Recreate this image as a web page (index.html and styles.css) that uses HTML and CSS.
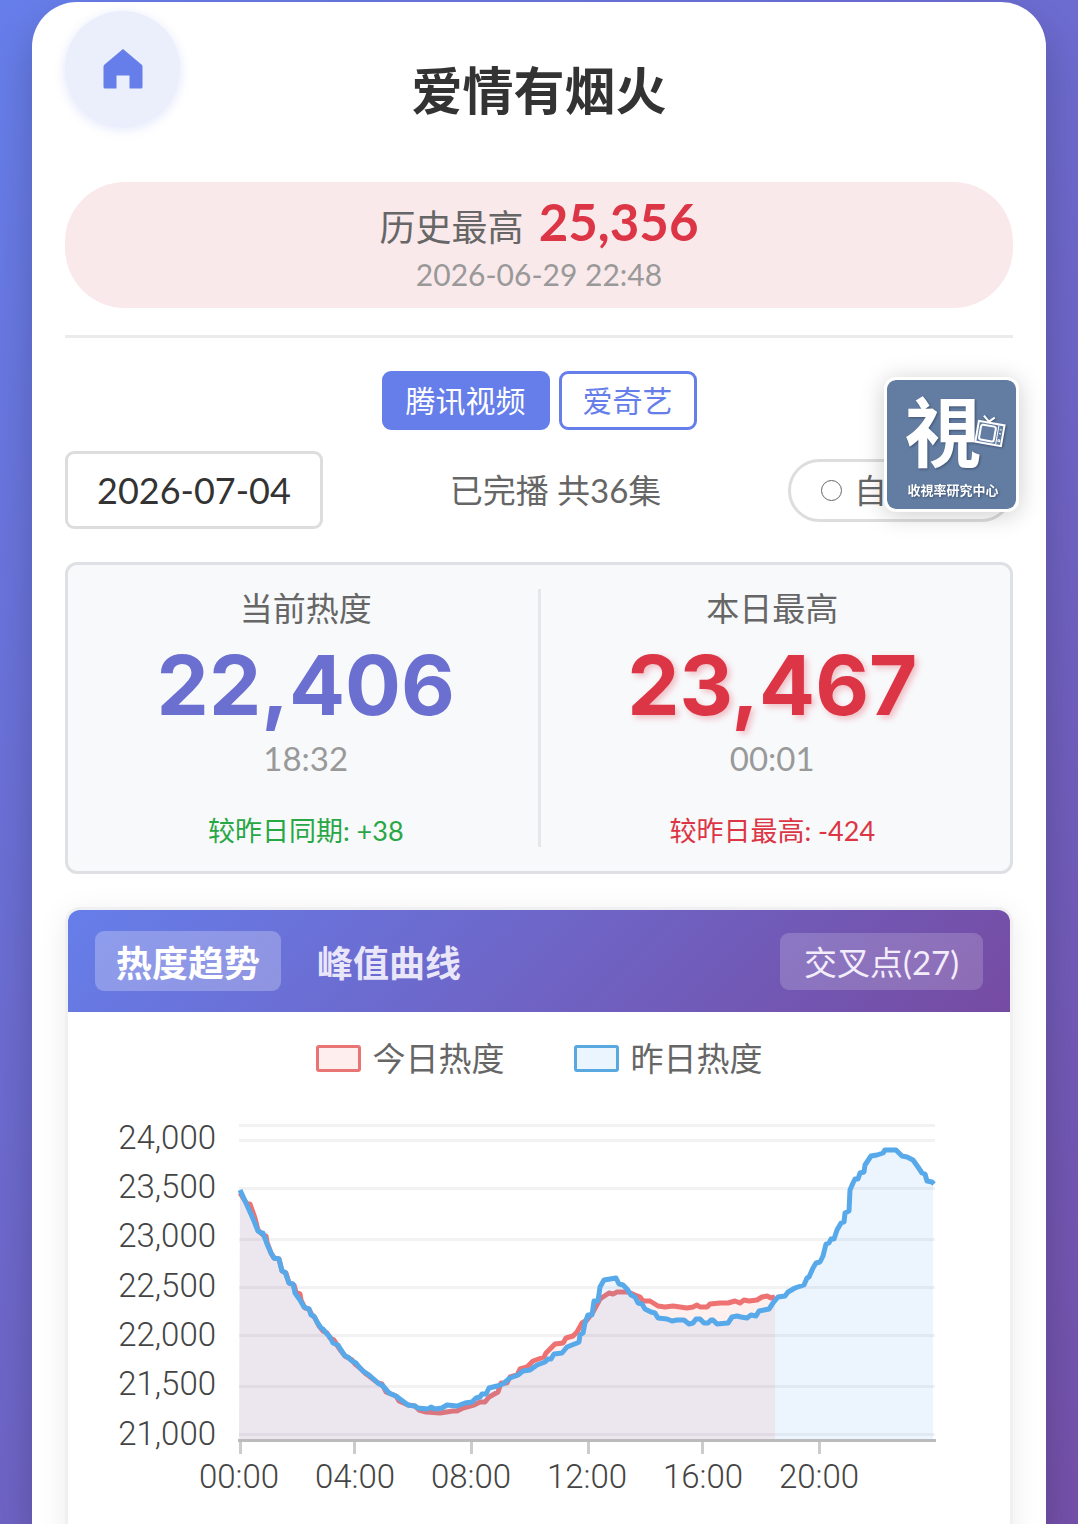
FILE: index.html
```html
<!DOCTYPE html>
<html lang="zh-CN">

<head>
    <meta charset="utf-8">
    <meta name="viewport" content="width=device-width, initial-scale=1.0">
    <title>爱情有烟火</title>
    <link rel="stylesheet" href="styles.css">
</head>

<body>
    <main class="container">
        <header class="header">
            <a class="home" href="#" aria-label="首页">
                <svg viewBox="0 0 40 40" width="40" height="40">
                    <path fill="#667eea" d="M20 0 L39 16 Q39.500 16.500 39.500 18 V38 Q39.500 39.500 38 39.500 H26.500 V26.500 H13.500 V39.500 H2 Q.5 39.500 .5 38 V18 Q.5 16.500 1 16 Z" />
                </svg>
            </a>
            <h1>爱情有烟火</h1>
        </header>

        <section class="record">
            <p class="record-top">历史最高 <strong>25,356</strong></p>
            <p class="record-time">2026-06-29 22:48</p>
        </section>

        <nav class="platforms">
            <button class="platform valgt">腾讯视频</button>
            <button class="platform">爱奇艺</button>
        </nav>

        <div class="controls">
            <input class="date" type="text" value="2026-07-04" aria-label="日期">
            <p class="status">已完播 共36集</p>
            <button class="auto"><span class="dot"></span>自动刷新</button>
        </div>

        <section class="stats">
            <div class="stat">
                <h2>当前热度</h2>
                <p class="number now">22,406</p>
                <p class="time">18:32</p>
                <p class="diff up">较昨日同期: +38</p>
            </div>
            <div class="divider"></div>
            <div class="stat">
                <h2>本日最高</h2>
                <p class="number top">23,467</p>
                <p class="time">00:01</p>
                <p class="diff down">较昨日最高: -424</p>
            </div>
        </section>

        <section class="chart">
            <div class="chart-head">
                <div class="tabs">
                    <button class="tab active">热度趋势</button>
                    <button class="tab">峰值曲线</button>
                </div>
                <button class="cross">交叉点(27)</button>
            </div>
            <div class="legend">
                <span class="item"><i class="box red"></i>今日热度</span>
                <span class="item"><i class="box blue"></i>昨日热度</span>
            </div>
            <svg class="plot" viewBox="0 0 942 480">
                <g class="labels-y">
                    <text x="148" y="68">24,000</text>
                    <text x="148" y="117">23,500</text>
                    <text x="148" y="166">23,000</text>
                    <text x="148" y="216">22,500</text>
                    <text x="148" y="265">22,000</text>
                    <text x="148" y="314">21,500</text>
                    <text x="148" y="364">21,000</text>
                </g>
                <g transform="translate(171 44)">
                    <path class="grid" d="M0 .5H696M0 15.500H696M0 63.500H696M0 114.500H696M0 162.500H696M0 210.500H696M0 261.500H696M0 309.500H696" />

                    <!-- 今日 -->
                    <path class="fill-red" d="M0 315 L1 68 8 79 11 79 16 93 19 105 24 110 28 117 32 128 35 133 40 134 43 146 47 148 50 158 55 160 57 167 61 169 66 183 70 184 73 190 76 193 80 201 84 206 88 208 91 213 95 215 98 220 102 226 106 231 113 235 116 239 121 243 127 249 130 251 139 258 143 259 147 267 157 271 160 276 169 280 176 281 180 285 187 287 201 288 214 286 218 286 224 283 235 280 241 277 246 277 250 272 259 267 262 258 268 258 271 252 278 250 281 244 288 242 294 236 305 232 307 228 316 219 324 218 327 213 334 211 338 207 343 198 348 195 354 187 361 174 370 168 374 169 378 167 389 167 396 170 401 172 404 176 411 176 419 181 426 182 434 181 448 183 454 182 458 180 461 182 468 182 471 179 481 178 489 178 496 176 501 178 505 175 510 176 518 175 523 172 528 171 532 173 536 172 V315Z" />
                    <path class="line-red" d="M1 68 8 79 11 79 16 93 19 105 24 110 27 111 28 117 32 128 35 133 40 134 43 146 47 148 50 158 55 160 57 167 61 169 62 175 66 183 70 184 73 190 76 193 80 201 84 206 88 208 91 213 95 215 98 220 102 226 106 231 113 235 116 239 121 243 127 249 130 251 139 258 143 259 147 267 157 271 160 276 169 280 176 281 180 285 187 287 201 288 214 286 218 286 224 283 235 280 241 277 246 277 250 272 259 267 262 258 268 258 271 252 278 250 281 244 288 242 294 236 305 232 307 228 316 219 324 218 327 213 334 211 338 207 343 198 348 195 354 187 361 174 370 168 374 169 378 167 389 167 396 170 401 172 404 176 411 176 419 181 426 182 434 181 448 183 454 182 458 180 461 182 468 182 471 179 481 178 489 178 496 176 501 178 505 175 510 176 518 175 523 172 528 171 532 173 536 172" />

                    <!-- 昨日 -->
                    <path class="fill-blue" d="M0 315 L1 65 7 78 11 87 15 96 19 106 24 108 28 119 32 128 35 133 40 134 43 146 46 147 50 158 54 159 56 168 61 175 65 182 70 184 72 190 75 191 78 197 82 203 84 204 88 209 91 212 94 218 99 220 102 225 106 231 109 232 113 236 117 238 121 243 127 248 130 250 139 258 144 261 150 268 157 271 161 274 169 280 176 281 179 283 189 284 203 283 208 280 218 281 226 278 233 277 237 273 241 272 243 269 247 269 250 263 258 261 264 259 271 253 279 250 284 246 291 245 298 240 306 237 312 234 315 229 323 228 328 222 338 218 341 210 344 208 346 198 349 190 353 190 355 176 359 176 361 162 365 155 371 154 377 153 380 159 384 160 388 164 392 170 396 172 399 178 403 179 406 184 412 187 416 188 419 193 428 194 433 196 438 195 445 195 450 199 454 198 457 194 461 194 465 198 469 198 472 195 474 195 478 199 489 198 493 192 498 191 502 192 508 193 512 190 517 191 520 186 530 184 534 178 539 172 546 171 549 167 556 163 565 160 568 153 570 152 574 143 577 138 581 137 584 131 587 119 590 118 592 114 595 114 598 105 602 98 605 97 606 88 610 86 611 65 614 58 616 54 619 54 621 48 625 47 626 40 632 31 638 30 644 28 646 25 657 25 663 31 668 32 674 35 679 42 683 48 686 49 688 56 694 58 V315Z" />
                    <path class="line-blue" d="M1 65 7 78 11 87 15 96 19 106 22 108 24 108 28 119 32 128 35 133 40 134 43 146 46 147 50 158 54 159 56 168 61 175 65 182 70 184 72 190 75 191 78 197 82 203 84 204 88 209 91 212 94 218 99 220 102 225 106 231 109 232 113 236 117 238 121 243 124 246 127 248 130 250 139 258 144 261 150 268 157 271 161 274 169 280 176 281 179 283 189 284 192 282 196 284 203 283 208 280 218 281 226 278 233 277 237 273 241 272 243 269 247 269 250 263 258 261 264 259 271 253 279 250 284 246 291 245 298 240 306 237 309 234 312 234 315 229 323 228 328 222 338 218 340 217 341 210 344 208 346 198 349 190 353 190 355 176 359 176 361 162 365 155 371 154 377 153 380 159 384 160 388 164 392 170 396 172 399 178 403 179 406 184 412 187 416 188 419 193 428 194 433 196 438 195 445 195 450 199 454 198 457 194 461 194 465 198 469 198 472 195 474 195 478 199 489 198 493 192 498 191 502 192 508 193 512 190 517 191 520 186 530 184 534 178 539 172 546 171 549 167 556 163 565 160 568 153 570 152 574 143 577 138 581 137 584 131 587 119 590 118 592 114 595 114 598 105 602 98 605 97 606 88 610 86 611 65 614 58 616 54 619 54 621 48 625 47 626 40 632 31 638 30 644 28 646 25 657 25 663 31 668 32 674 35 679 42 683 48 686 49 688 56 693 57 695 59" />

                    <path class="axis" d="M-1 315.500H697" />
                    <path class="tick" d="M1.500 317V329M115.500 317V329M232.500 317V329M349.500 317V329M463.500 317V329M580.500 317V329" />
                </g>
                <g class="labels-x">
                    <text x="171" y="407">00:00</text>
                    <text x="287" y="407">04:00</text>
                    <text x="403" y="407">08:00</text>
                    <text x="519" y="407">12:00</text>
                    <text x="635" y="407">16:00</text>
                    <text x="751" y="407">20:00</text>
                </g>
            </svg>
        </section>
    </main>

    <a class="logo" href="#" aria-label="收視率研究中心">
        <svg viewBox="0 0 129 129">
            <rect width="129" height="129" fill="#627da1" />
            <g class="logo-shade">
                <text class="logo-big" x="56" y="81">視</text>
                <g transform="rotate(10 103 53)" fill="none" stroke="#fff" stroke-width="2">
                    <rect x="90" y="43" width="26" height="21" fill="#627da1" />
                    <rect x="93" y="46" width="15" height="15" rx="2" />
                    <path d="M94 37 L100 42 L105 37" />
                    <path stroke-width="1" d="M110.500 44V63" />
                    <circle cx="113" cy="59" r="1" stroke-width="1" />
                    <path stroke-width="1" d="M112 48H114M112 52H114" />
                </g>
                <text class="logo-small" x="66" y="115">收視率研究中心</text>
            </g>
        </svg>
    </a>
</body>

</html>
```
FILE: styles.css
```css
* {
    margin: 0;
    padding: 0;
    box-sizing: border-box;
}

html {
    height: 100%;
}

body {
    height: 100vh;
    display: flex;
    overflow: hidden;
    padding: 2px 32px 0;
    background: linear-gradient(135deg, #667eea 0%, #764ba2 100%);
    background-size: 100% 120%;
    font-family: Lato, "Noto Sans CJK SC", sans-serif;
    color: #333;
}

button,
input {
    font-family: inherit;
}

.container {
    flex: 1;
    min-width: 0;
    padding: 9px 33px 0;
    background: white;
    border-radius: 45px 45px 0 0;
    box-shadow: 0 20px 40px rgba(0, 0, 0, .2);
}

/* Top */
.header {
    display: grid;
    grid-template-columns: 1fr auto 1fr;
    align-items: start;
    margin-bottom: 56px;
}

.home {
    display: flex;
    align-items: center;
    justify-content: center;
    width: 115px;
    height: 115px;
    border-radius: 50%;
    background: #ebeffc;
    box-shadow: 0 3px 12px rgba(102, 126, 234, .2);
}

h1 {
    margin-top: 50px;
    font-size: 51px;
    line-height: 60px;
}

.record {
    padding: 14px 0 14px;
    border-radius: 60px;
    background: #fae9eb;
    text-align: center;
}

.record-top {
    height: 56px;
    font-size: 36px;
    line-height: 56px;
    color: #666;
}

.record-top strong {
    margin-left: 6px;
    font-size: 51px;
    line-height: 51px;
    color: #dc3545;
}

.record-time {
    margin-top: 2px;
    font-size: 30px;
    line-height: 40px;
    color: #999;
}

/* Platforme */
.platforms {
    display: flex;
    justify-content: center;
    gap: 9px;
    margin-top: 27px;
    padding-top: 33px;
    border-top: 3px solid #ebebed;
}

.platform {
    height: 59px;
    padding: 0 21px;
    border: 3px solid #667eea;
    border-radius: 9px;
    background: white;
    color: #667eea;
    font-size: 30px;
    line-height: 45px;
}

.valgt {
    background: #667eea;
    color: white;
}

.controls {
    display: flex;
    align-items: center;
    justify-content: space-between;
    margin: 21px 0 33px;
}

.date {
    width: 258px;
    height: 78px;
    border: 3px solid #ddd;
    border-radius: 9px;
    color: #333;
    font-size: 36px;
    text-align: center;
}

.status {
    font-size: 33px;
    line-height: 39px;
    color: #666;
}

.auto {
    display: flex;
    align-items: center;
    gap: 12px;
    height: 63px;
    padding: 0 24px 0 30px;
    border: 3px solid #ddd;
    border-radius: 32px;
    background: white;
    color: #666;
    font-size: 33px;
    line-height: 39px;
}

.dot {
    width: 21px;
    height: 21px;
    border: 1px solid #666;
    border-radius: 50%;
}

/* Tal */
.stats {
    display: grid;
    grid-template-columns: 1fr 3px 1fr;
    padding: 24px 6px;
    border: 3px solid #dee0e3;
    border-radius: 12px;
    background: #f8f9fb;
    text-align: center;
}

.divider {
    background: #e6e7ea;
}

.stat h2 {
    font-size: 33px;
    font-weight: 400;
    line-height: 38px;
    color: #666;
}

.number {
    margin: 10px 0 6px;
    font-family: Inter, sans-serif;
    font-size: 83px;
    font-weight: 700;
    line-height: 96px;
}

.now {
    color: #6b6fd0;
}

.top {
    color: #dc3545;
    text-shadow: 3px 3px 6px rgba(220, 53, 69, .3);
}

.time {
    font-size: 33px;
    line-height: 39px;
    color: #999;
}

.diff {
    margin-top: 36px;
    font-size: 27px;
    line-height: 33px;
}

.up {
    color: #28a745;
}

.down {
    color: #dc3545;
}

/* Graf */
.chart {
    margin-top: 33px;
    border: 3px solid #f0f0f2;
    border-radius: 15px;
    overflow: hidden;
    background: white;
    box-shadow: 0 6px 30px rgba(0, 0, 0, .08);
}

.chart-head {
    display: flex;
    align-items: center;
    justify-content: space-between;
    height: 102px;
    padding: 0 27px;
    background: linear-gradient(135deg, #667eea 0%, #764ba2 100%);
}

.tabs {
    display: flex;
    gap: 15px;
}

.tab,
.cross {
    padding: 0 21px;
    border: none;
    border-radius: 9px;
    background: none;
    color: #e9e6fa;
}

.tab {
    height: 60px;
    font-size: 36px;
    font-weight: 700;
}

.active {
    background: rgba(255, 255, 255, .25);
    color: white;
}

.cross {
    height: 57px;
    padding: 0 24px;
    background: rgba(255, 255, 255, .18);
    color: #f3ecfa;
    font-size: 33px;
}

.legend {
    display: flex;
    justify-content: center;
    gap: 69px;
    padding-top: 24px;
    color: #666;
    font-size: 33px;
    line-height: 45px;
}

.item {
    display: flex;
    align-items: center;
    gap: 12px;
}

.box {
    width: 45px;
    height: 27px;
    border: 3px solid;
    border-radius: 3px;
}

.red {
    border-color: #e87474;
    background: #ffeeee;
}

.blue {
    border-color: #5aa8e0;
    background: #ebf5fe;
}

.plot {
    display: block;
    width: 100%;
    font-family: Roboto, sans-serif;
    font-size: 33px;
    font-weight: 300;
    fill: #444;
}

.labels-y {
    text-anchor: end;
}

.labels-x {
    text-anchor: middle;
}

.grid,
.axis,
.tick,
.line-red,
.line-blue {
    fill: none;
    stroke-width: 3;
}

.grid {
    stroke: #f2f2f2;
}

.axis {
    stroke: #bbb;
}

.tick {
    stroke: #ccc;
}

.line-red,
.line-blue {
    stroke-width: 5;
    stroke-linejoin: round;
}

.line-red {
    stroke: #ee7272;
}

.line-blue {
    stroke: #57a9ea;
}

.fill-red {
    fill: rgba(255, 107, 107, .1);
}

.fill-blue {
    fill: rgba(72, 160, 240, .1);
}

/* Logo over siden */
.logo {
    position: fixed;
    top: 377px;
    right: 59px;
    width: 135px;
    height: 135px;
    border: 3px solid white;
    border-radius: 12px;
    overflow: hidden;
    background: white;
    box-shadow: 0 3px 24px rgba(0, 0, 0, .2);
}

.logo svg {
    display: block;
    border-radius: 8px;
}

.logo text {
    fill: white;
    font-family: "Noto Sans CJK TC", sans-serif;
    font-weight: 700;
    text-anchor: middle;
}

.logo-big {
    font-size: 76px;
}

.logo-small {
    font-size: 13px;
}

.logo-shade {
    filter: drop-shadow(1px 1px 1px rgba(30, 40, 70, .5));
}
```
